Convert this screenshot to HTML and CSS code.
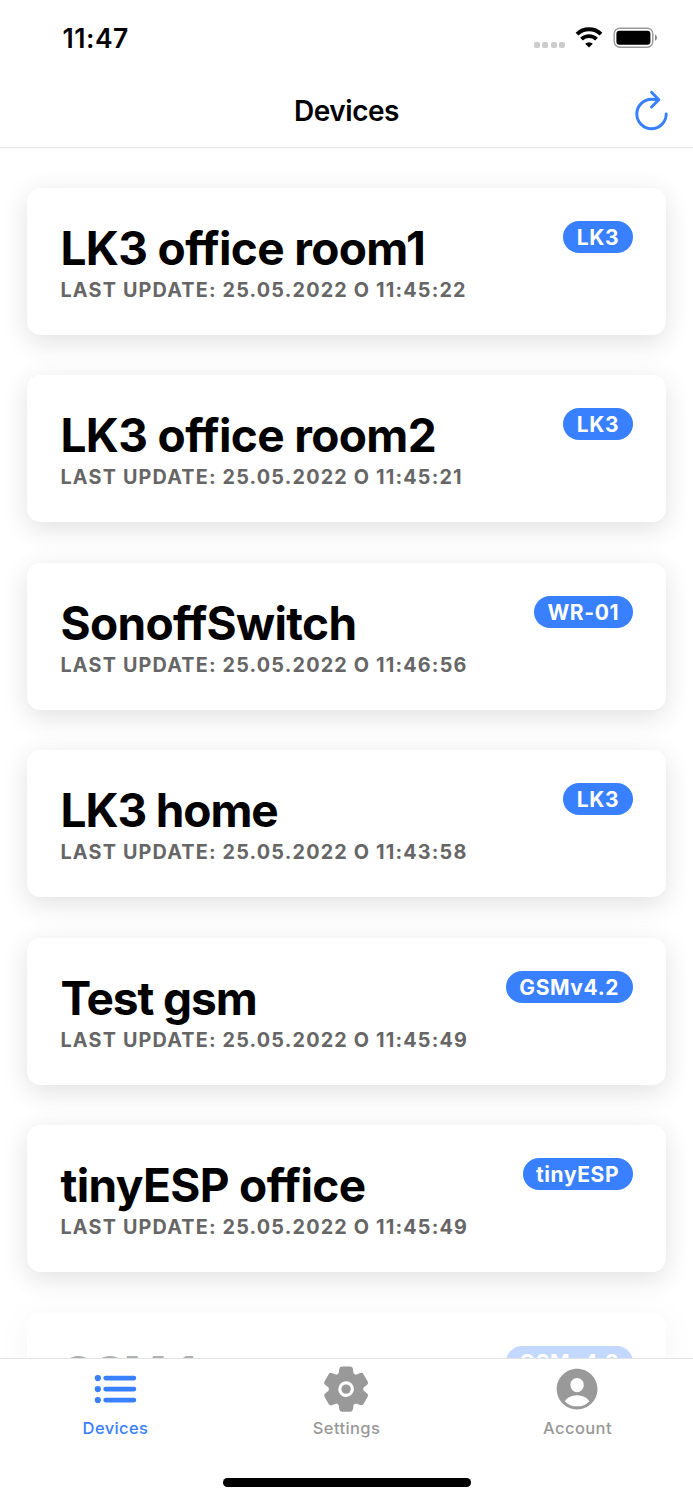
FILE: index.html
```
<!DOCTYPE html>
<html lang="en">
<head>
<meta charset="utf-8">
<title>Devices</title>
<link rel="stylesheet" href="styles.css">
</head>
<body>
<div class="app">
  <div class="status">
    <span class="time">11:47</span>
    <div class="indicators">
      <div class="signal"><i></i><i></i><i></i><i></i></div>
      <svg class="wifi" width="28" height="21" viewBox="0 0 28 21">
        <g fill="none" stroke="#000" stroke-width="3.9">
          <path d="M2 7.2a17.2 17.2 0 0 1 24 0"/>
          <path d="M6.5 12.2a10.8 10.8 0 0 1 15 0"/>
        </g>
        <path d="M14 20.6l-3.8-3.9a5.4 5.4 0 0 1 7.6 0z"/>
      </svg>
      <svg class="battery" width="45" height="22" viewBox="0 0 45 22">
        <rect x="1.2" y="1.2" width="38.6" height="19" rx="5.6" fill="none" stroke="#999" stroke-width="1.4"/>
        <rect x="3.4" y="3.7" width="34" height="14" rx="3"/>
        <path d="M42 7.6c2.6 1.2 2.6 5.2 0 6.4z" fill="#8c8c8c"/>
      </svg>
    </div>
  </div>
  <header class="toolbar">
    <h1 class="heading">Devices</h1>
    <svg class="refresh" viewBox="0 0 512 512">
      <path d="M320 146s24.36-12-64-12a160 160 0 10160 160"/>
      <path d="M256 58l80 80-80 80"/>
    </svg>
  </header>
  <main class="content">
    <article class="card">
      <div><h2 class="name wide">LK3 office room1</h2><p class="update">Last update: 25.05.2022 o 11:45:22</p></div>
      <span class="badge">LK3</span>
    </article>
    <article class="card">
      <div><h2 class="name wide">LK3 office room2</h2><p class="update">Last update: 25.05.2022 o 11:45:21</p></div>
      <span class="badge">LK3</span>
    </article>
    <article class="card">
      <div><h2 class="name wide">SonoffSwitch</h2><p class="update">Last update: 25.05.2022 o 11:46:56</p></div>
      <span class="badge">WR-01</span>
    </article>
    <article class="card">
      <div><h2 class="name">LK3 home</h2><p class="update">Last update: 25.05.2022 o 11:43:58</p></div>
      <span class="badge">LK3</span>
    </article>
    <article class="card">
      <div><h2 class="name">Test gsm</h2><p class="update">Last update: 25.05.2022 o 11:45:49</p></div>
      <span class="badge">GSMv4.2</span>
    </article>
    <article class="card">
      <div><h2 class="name wide">tinyESP office</h2><p class="update">Last update: 25.05.2022 o 11:45:49</p></div>
      <span class="badge">tinyESP</span>
    </article>
    <article class="card offline">
      <div><h2 class="name wide">GSM 1</h2></div>
      <span class="badge">GSMv4.2</span>
    </article>
  </main>
  <footer class="footer">
    <nav class="tabs">
      <a class="tab active">
        <svg class="icon" viewBox="0 0 512 512">
          <path d="M160 144h288M160 256h288M160 368h288" fill="none" stroke="currentColor" stroke-width="48" stroke-linecap="round"/>
          <circle cx="80" cy="144" r="32"/><circle cx="80" cy="256" r="32"/><circle cx="80" cy="368" r="32"/>
        </svg>
        <span>Devices</span>
      </a>
      <a class="tab">
        <svg class="icon" viewBox="0 0 512 512">
          <circle cx="256" cy="256" r="48"/>
          <path d="M470.39 300l-.47-.38-31.56-24.75a16.11 16.11 0 01-6.1-13.33v-11.56a16 16 0 016.11-13.22L469.92 212l.47-.38a26.68 26.68 0 005.9-34.06l-42.71-73.9a1.59 1.59 0 01-.13-.22A26.86 26.86 0 00401 92.14l-.35.13-37.1 14.93a15.94 15.94 0 01-14.47-1.29q-4.92-3.1-10-5.86a15.94 15.94 0 01-8.19-11.82l-5.59-39.59-.12-.72A27.22 27.22 0 00298.76 26h-85.52a26.92 26.92 0 00-26.45 22.39l-.09.56-5.57 39.67a16 16 0 01-8.13 11.82 175.21 175.21 0 00-10 5.82 15.92 15.92 0 01-14.43 1.27l-37.13-15-.35-.14a26.87 26.87 0 00-32.48 11.34l-.13.22-42.77 73.95a26.71 26.71 0 005.9 34.1l.47.38 31.56 24.75a16.11 16.11 0 016.1 13.33v11.56a16 16 0 01-6.11 13.22L42.08 300l-.47.38a26.68 26.68 0 00-5.9 34.06l42.71 73.9a1.59 1.59 0 01.13.22 26.86 26.86 0 0032.45 11.3l.35-.13 37.07-14.93a15.94 15.94 0 0114.47 1.29q4.92 3.11 10 5.86a15.94 15.94 0 018.19 11.82l5.56 39.59.12.72A27.22 27.22 0 00213.24 486h85.52a26.92 26.92 0 0026.45-22.39l.09-.56 5.57-39.67a16 16 0 018.18-11.82c3.42-1.84 6.76-3.79 10-5.82a15.92 15.92 0 0114.43-1.27l37.13 14.95.35.14a26.85 26.85 0 0032.48-11.34 2.53 2.53 0 01.13-.22l42.71-73.89a26.7 26.7 0 00-5.9-34.11zm-134.48-40.24a80 80 0 11-83.66-83.67 80.21 80.21 0 0183.66 83.67z"/>
        </svg>
        <span>Settings</span>
      </a>
      <a class="tab">
        <svg class="icon" viewBox="0 0 512 512">
          <path d="M256 48C141.31 48 48 141.31 48 256s93.31 208 208 208 208-93.31 208-208S370.69 48 256 48zm-50.22 116.82C218.45 151.39 236.28 144 256 144s37.39 7.44 50.11 20.94c12.89 13.68 19.16 32.06 17.68 51.82C320.83 256 290.43 288 256 288s-64.89-32-67.79-71.25c-1.47-19.92 4.79-38.36 17.57-51.93zM256 432a175.49 175.49 0 01-126-53.22 122.91 122.91 0 0135.14-33.44C190.63 329 222.89 320 256 320s65.37 9 90.83 25.34A122.87 122.87 0 01382 378.78 175.45 175.45 0 01256 432z"/>
        </svg>
        <span>Account</span>
      </a>
    </nav>
    <div class="home-bar"></div>
  </footer>
</div>
</body>
</html>
```
FILE: styles.css
```
* { box-sizing: border-box; margin: 0; padding: 0; }
body { background: #fff; color: #000; font-family: Inter, "Liberation Sans", sans-serif; }
.app { width: 693px; height: 1500px; display: flex; flex-direction: column; overflow: hidden; }
.status { height: 74px; flex: none; display: flex; justify-content: space-between; align-items: flex-start; padding: 22px 35px 0 62.6px; }
.time { font-size: 26.5px; line-height: 33px; font-weight: 600; letter-spacing: 0.5px; }
.indicators { display: flex; align-items: flex-start; padding-top: 5px; }
.signal { display: flex; gap: 2.4px; padding-top: 14.5px; margin-right: 10px; }
.signal i { width: 6px; height: 6px; border-radius: 2px; background: #ccc; }
.wifi { margin-right: 10px; }
.toolbar { height: 74px; flex: none; display: grid; grid-template-columns: 1fr auto 1fr; align-items: center; border-bottom: 1px solid #e2e2e2; padding: 0 18.4px; }
.heading { grid-column: 2; font-size: 28px; line-height: 36px; font-weight: 600; letter-spacing: -0.45px; }
.refresh { justify-self: end; width: 47px; height: 47px; fill: none; stroke: #3880ff; stroke-width: 32; stroke-linecap: round; stroke-linejoin: round; }
.content { flex: 1; min-height: 0; overflow: hidden; padding: 39.7px 27px 0; display: flex; flex-direction: column; gap: 40.5px; }
.card { height: 147px; flex: none; display: flex; justify-content: space-between; align-items: flex-start; padding: 33.3px 33.5px; border-radius: 13.4px; background: #fff; box-shadow: 0 6.7px 26.8px rgba(0, 0, 0, 0.12); }
.name { font-size: 46px; line-height: 54px; font-weight: 700; letter-spacing: -1.1px; white-space: nowrap; }
.wide { letter-spacing: -0.64px; }
.update { margin-top: 3px; font-size: 19.8px; line-height: 25px; font-weight: 700; letter-spacing: 1.18px; color: #666; text-transform: uppercase; white-space: nowrap; }
.badge { height: 32px; border-radius: 16px; padding: 0 13.4px; background: #3880ff; color: #fff; font-size: 21px; line-height: 33px; font-weight: 700; letter-spacing: 0.6px; }
.offline { opacity: 0.3; }
.footer { height: 142px; flex: none; border-top: 1px solid #e2e2e2; background: #fff; display: flex; flex-direction: column; align-items: center; }
.tabs { width: 100%; height: 119px; display: grid; grid-template-columns: repeat(3, 1fr); }
.tab { display: flex; flex-direction: column; align-items: center; padding-top: 5px; color: #999; font-size: 16.5px; line-height: 22px; font-weight: 500; letter-spacing: 0.4px; }
.tab span { margin-top: 2.8px; }
.active { color: #3880ff; }
.icon { width: 50.2px; height: 50.2px; margin-right: 0.4px; fill: currentColor; }
.home-bar { width: 248px; height: 8.5px; border-radius: 4.3px; background: #000; }
```
